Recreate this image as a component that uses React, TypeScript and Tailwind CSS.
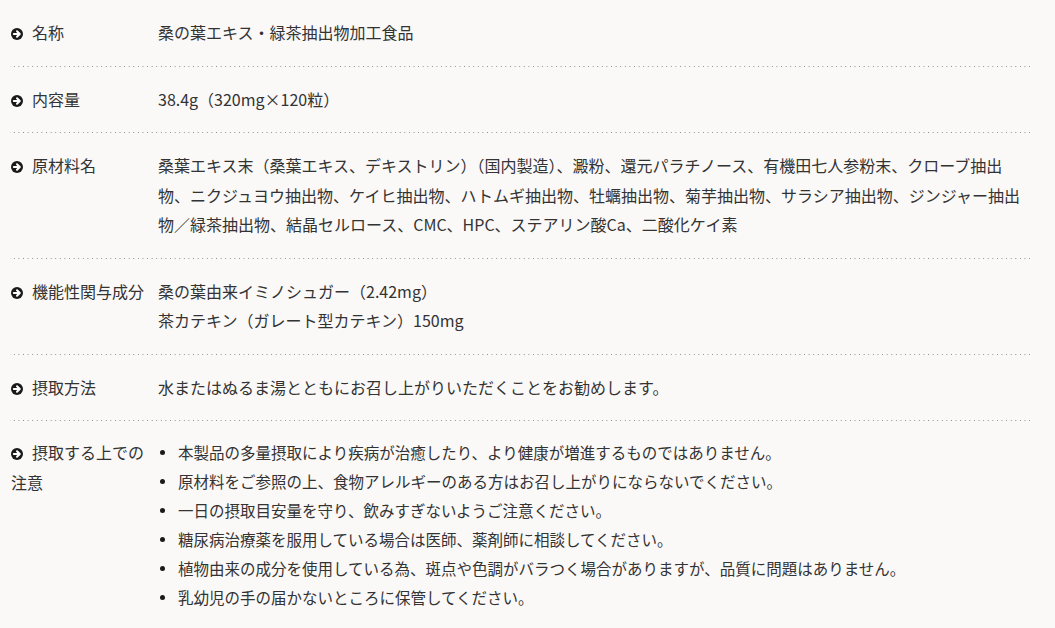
import React from "react";

const font = {
  fontFamily: '"Noto Sans CJK JP", "Noto Sans", sans-serif',
};

const rowCls =
  "flex pt-[18px] pb-[19px] leading-[29.5px] bg-[linear-gradient(to_right,#8c8c8c_1px,transparent_1px)] bg-[length:4.6px_1px] bg-repeat-x bg-bottom";
const lastRowCls = "flex pt-[17px] pb-[18px] leading-[29.5px]";

function ArrowIcon() {
  return (
    <svg
      viewBox="0 0 12 12"
      className="inline-block w-[12px] h-[12px] align-[-1px] mr-[9px]"
    >
      <circle cx="6" cy="6" r="6" fill="#1a1a1a" />
      <path d="M2.8 6 H8" stroke="#fff" strokeWidth="2" strokeLinecap="round" />
      <path
        d="M6 3.2 L8.8 6 L6 8.8"
        stroke="#fff"
        strokeWidth="2"
        fill="none"
        strokeLinecap="round"
        strokeLinejoin="round"
      />
    </svg>
  );
}

function Label({ children }: { children: React.ReactNode }) {
  return (
    <div className="w-[137px] shrink-0 pl-[1px]">
      <ArrowIcon />
      {children}
    </div>
  );
}

const notes = [
  "本製品の多量摂取により疾病が治癒したり、より健康が増進するものではありません。",
  "原材料をご参照の上、食物アレルギーのある方はお召し上がりにならないでください。",
  "一日の摂取目安量を守り、飲みすぎないようご注意ください。",
  "糖尿病治療薬を服用している場合は医師、薬剤師に相談してください。",
  "植物由来の成分を使用している為、斑点や色調がバラつく場合がありますが、品質に問題はありません。",
  "乳幼児の手の届かないところに保管してください。",
];

export default function App() {
  return (
    <div
      className="min-h-[628px] w-[1055px] bg-[#faf9f8] text-[#333333] text-[16px]"
      style={font}
    >
      <div className="ml-[10px] mr-[22px]">
        <div className={rowCls}>
          <Label>名称</Label>
          <div className="flex-1 pl-[11px] pr-[6px]">桑の葉エキス・緑茶抽出物加工食品</div>
        </div>
        <div className={rowCls}>
          <Label>内容量</Label>
          <div className="flex-1 pl-[11px] pr-[6px]">38.4g（320mg×120粒）</div>
        </div>
        <div className={rowCls}>
          <Label>原材料名</Label>
          <div className="flex-1 pl-[11px] pr-[6px]">
            桑葉エキス末（桑葉エキス、デキストリン）（国内製造）、澱粉、還元パラチノース、有機田七人参粉末、クローブ抽出物、ニクジュヨウ抽出物、ケイヒ抽出物、ハトムギ抽出物、牡蠣抽出物、菊芋抽出物、サラシア抽出物、ジンジャー抽出物／緑茶抽出物、結晶セルロース、CMC、HPC、ステアリン酸Ca、二酸化ケイ素
          </div>
        </div>
        <div className={rowCls}>
          <Label>機能性関与成分</Label>
          <div className="flex-1 pl-[11px] pr-[6px]">
            <div>桑の葉由来イミノシュガー（2.42mg）</div>
            <div>茶カテキン（ガレート型カテキン）150mg</div>
          </div>
        </div>
        <div className={rowCls}>
          <Label>摂取方法</Label>
          <div className="flex-1 pl-[11px] pr-[6px]">
            水またはぬるま湯とともにお召し上がりいただくことをお勧めします。
          </div>
        </div>
        <div className={lastRowCls}>
          <Label>摂取する上での注意</Label>
          <ul className="flex-1 pl-[11px] pr-[6px] text-[15.5px] leading-[29px]">
            {notes.map((n) => (
              <li key={n} className="flex items-start">
                <span className="w-[20px] shrink-0 flex h-[29px] items-center">
                  <span className="ml-[2px] w-[5px] h-[5px] rounded-full bg-[#1a1a1a]" />
                </span>
                <span>{n}</span>
              </li>
            ))}
          </ul>
        </div>
      </div>
    </div>
  );
}
